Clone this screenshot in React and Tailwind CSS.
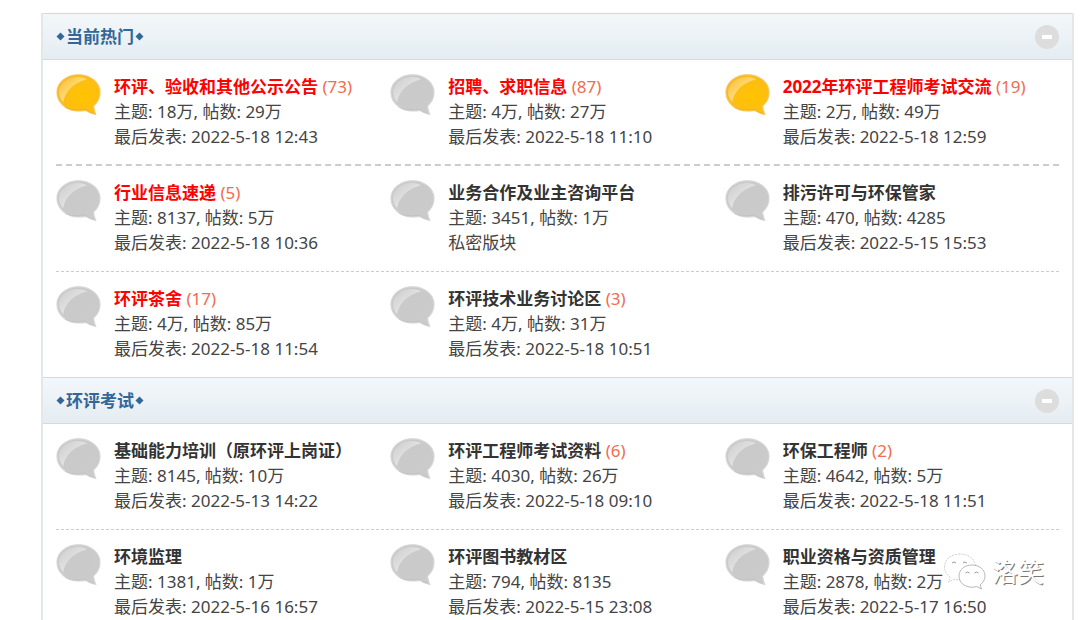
import { useState } from 'react'

const SECTIONS = [
  {
    title: '当前热门',
    strongDivider: true,
    rows: [
      [
        { title: '环评、验收和其他公示公告', today: 73, topics: '18万', posts: '29万', last: '2022-5-18 12:43', hot: true, fresh: true },
        { title: '招聘、求职信息', today: 87, topics: '4万', posts: '27万', last: '2022-5-18 11:10', hot: true },
        { title: '2022年环评工程师考试交流', today: 19, topics: '2万', posts: '49万', last: '2022-5-18 12:59', hot: true, fresh: true },
      ],
      [
        { title: '行业信息速递', today: 5, topics: '8137', posts: '5万', last: '2022-5-18 10:36', hot: true },
        { title: '业务合作及业主咨询平台', topics: '3451', posts: '1万' },
        { title: '排污许可与环保管家', topics: '470', posts: '4285', last: '2022-5-15 15:53' },
      ],
      [
        { title: '环评茶舍', today: 17, topics: '4万', posts: '85万', last: '2022-5-18 11:54', hot: true },
        { title: '环评技术业务讨论区', today: 3, topics: '4万', posts: '31万', last: '2022-5-18 10:51' },
      ],
    ],
  },
  {
    title: '环评考试',
    rows: [
      [
        { title: '基础能力培训（原环评上岗证）', topics: '8145', posts: '10万', last: '2022-5-13 14:22' },
        { title: '环评工程师考试资料', today: 6, topics: '4030', posts: '26万', last: '2022-5-18 09:10' },
        { title: '环保工程师', today: 2, topics: '4642', posts: '5万', last: '2022-5-18 11:51' },
      ],
      [
        { title: '环境监理', topics: '1381', posts: '1万', last: '2022-5-16 16:57' },
        { title: '环评图书教材区', topics: '794', posts: '8135', last: '2022-5-15 23:08' },
        { title: '职业资格与资质管理', topics: '2878', posts: '2万', last: '2022-5-17 16:50' },
      ],
    ],
  },
]

// Shared gradients for the speech bubbles
function BubbleDefs() {
  return (
    <svg className="absolute h-0 w-0" aria-hidden="true">
      <defs>
        <radialGradient id="bubble-new" cx="0.62" cy="0.55" r="0.7">
          <stop offset="0" stopColor="#ffc400" />
          <stop offset="0.6" stopColor="#fdbe12" />
          <stop offset="1" stopColor="#f7b42c" />
        </radialGradient>
        <linearGradient id="bubble-old" x1="0" y1="0" x2="1" y2="1">
          <stop offset="0" stopColor="#c9c9c9" />
          <stop offset="1" stopColor="#cbcbcb" />
        </linearGradient>
        <linearGradient id="bubble-shine" x1="0" y1="0" x2="0.6" y2="0.6">
          <stop offset="0" stopColor="#fff" stopOpacity="0.05" />
          <stop offset="1" stopColor="#fff" stopOpacity="0.5" />
        </linearGradient>
      </defs>
    </svg>
  )
}

function Bubble({ fresh }) {
  return (
    <svg className="h-[42px] w-[45px] shrink-0" viewBox="0 0 45 42" aria-hidden="true">
      <path
        d="M22.5 0.800C34.500 0.800 44 8.500 44 18.300c0 6-2.700 10.500-6.500 13.700.3 3 1 5.500 2.200 8.500-3.500-.6-7-2-9.700-4.200-2.300.5-4.800.7-7.500.7C10.500 37 1 28.500 1 18.300 1 8.500 10.500.8 22.500.8Z"
        fill={fresh ? 'url(#bubble-new)' : 'url(#bubble-old)'}
        stroke={fresh ? '#f6c65a' : '#d6d6d6'}
        strokeWidth="1.200"
      />
      <path
        d="M21 3C11 3.500 3 10 3 18.300c0 3.800 1.600 7.200 4.200 9.900C8.500 19 16 9 31 5.200 28 3.800 25 2.900 21 3Z"
        fill="url(#bubble-shine)"
      />
      <path d="M9 33c5 3 12 3.600 20 2 2.500 2 5.500 3.500 9 4.300" fill="none" stroke={fresh ? '#f3a32b' : '#bdbdbd'} strokeOpacity="0.6" />
    </svg>
  )
}

function Forum({ forum }) {
  return (
    <li className="flex gap-[13px]">
      <Bubble fresh={forum.fresh} />
      <div className="min-w-0 whitespace-nowrap leading-[25px]">
        <h3>
          <a href="#" className={forum.hot ? 'font-bold text-[#ff0000]' : 'font-bold text-[#333333]'}>
            {forum.title}
          </a>
          {forum.today && <span className="text-[#f26c4f]"> ({forum.today})</span>}
        </h3>
        <p>主题: {forum.topics}, 帖数: {forum.posts}</p>
        <p>
          {forum.last ? <a href="#">最后发表: {forum.last}</a> : '私密版块'}
        </p>
      </div>
    </li>
  )
}

function Diamond() {
  return (
    <svg className="size-[9px]" viewBox="0 0 9 9" aria-hidden="true">
      <path d="M4.500 0.500 8.500 4.500 4.500 8.500 0.500 4.500Z" fill="#336699" />
    </svg>
  )
}

function Section({ section }) {
  const [open, setOpen] = useState(true)
  return (
    <section>
      <header className="flex h-[47px] items-center justify-between border-y border-[#cddbe4] bg-linear-to-b from-[#f3f7fa] to-[#e5edf2] px-[13px]">
        <h2 className="flex items-center gap-px font-bold text-[#336699]">
          <Diamond />
          <a href="#">{section.title}</a>
          <Diamond />
        </h2>
        <button
          type="button"
          aria-label="收起/展开"
          aria-expanded={open}
          onClick={() => setOpen(!open)}
          className="flex size-6 items-center justify-center rounded-full bg-[#dddddd]"
        >
          <span className="h-1 w-[10px] bg-white" />
        </button>
      </header>
      {open && (
        <div className="px-[13px]">
          {section.rows.map((row, i) => (
            <ul
              key={i}
              className={
                section.strongDivider && i === 0
                  ? 'grid grid-cols-3 border-b-2 border-dashed border-[#cccccc] pt-[14px] pb-[15px]'
                  : 'grid grid-cols-3 border-b border-dashed border-[#cccccc] pt-[14px] pb-4 last:border-b-0'
              }
            >
              {row.map((forum) => (
                <Forum key={forum.title} forum={forum} />
              ))}
            </ul>
          ))}
        </div>
      )}
    </section>
  )
}

function Watermark() {
  return (
    <div className="pointer-events-none absolute right-9 bottom-[30px] flex items-center gap-[6px]">
      <svg className="h-[37px] w-[43px]" viewBox="0 0 43 37" fill="white" stroke="#999999" aria-hidden="true">
        <path
          d="M17 1C8 1 1.500 6.500 1.500 14c0 4.300 2.200 7.800 5.800 10.300L5.500 29l6-3c2 .6 3.700.8 5.500.8 8.500 0 15.500-5.800 15.500-13S25.500 1 17 1Z"
          stroke="#bbbbbb"
          strokeDasharray="2 1"
          strokeWidth="0.700"
        />
        <path d="M9 10q2-2 4 0M20 10q2-2 4 0" fill="none" />
        <path
          d="M29 12c-7.500 0-13 4.800-13 11s5.500 11.200 13 11.200c1.700 0 3.200-.3 4.700-.7l4.800 2.500-1.300-4.200c3-2.200 4.800-5.200 4.800-8.800 0-6.200-5.500-11-13-11Z"
          strokeWidth="0.700"
        />
        <path d="M22.500 20q2-2 4 0M31.500 20q2-2 4 0" fill="none" />
      </svg>
      <span className="text-[26px] leading-9 text-white [text-shadow:1px_1px_0_#777777]">洛笑</span>
    </div>
  )
}

export default function App() {
  return (
    <div
      lang="zh-CN"
      className="relative h-screen overflow-hidden bg-white pt-[13px] pr-[6px] pl-[41px] font-['Noto_Sans','Noto_Sans_CJK_SC',sans-serif] text-[17px] text-[#444444]"
    >
      <BubbleDefs />
      <main className="border-x-2 border-[#e3e7ea]">
        {SECTIONS.map((section) => (
          <Section key={section.title} section={section} />
        ))}
      </main>
      <Watermark />
    </div>
  )
}
